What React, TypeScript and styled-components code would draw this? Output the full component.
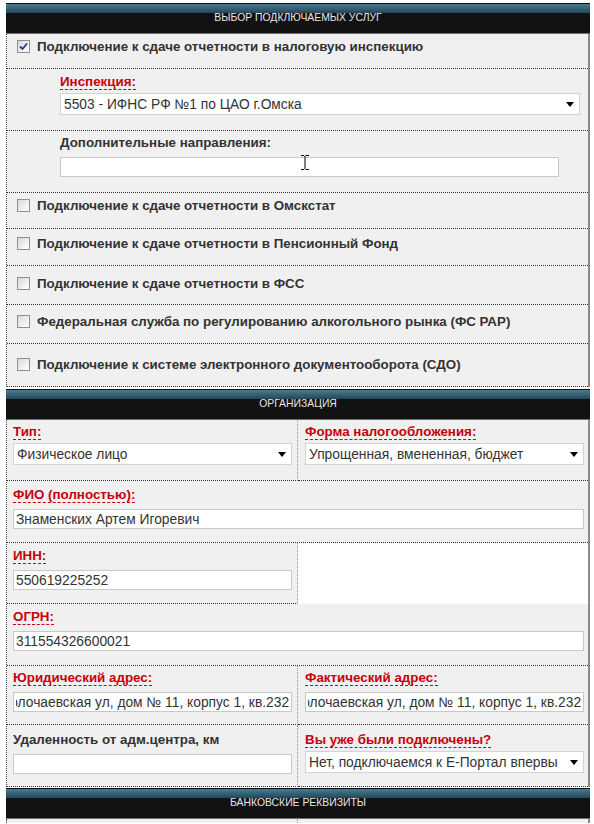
import React, { useLayoutEffect, useRef } from "react";
import styled, { createGlobalStyle } from "styled-components";

const Global = createGlobalStyle`
  * { box-sizing: border-box; }
  body {
    margin: 0;
    background: #fff;
    font-family: "Liberation Sans", Arial, sans-serif;
  }
`;

const Page = styled.div`
  padding: 3px 0 0 6px;
  width: 590px;
`;

const Section = styled.section<{ $gap?: number }>`
  margin-top: ${(p) => p.$gap ?? 0}px;
`;

const Header = styled.div`
  height: 31px;
  border-top: 1px solid #0b0b0b;
  border-bottom: 1px solid #6f6f6f;
  background: linear-gradient(to bottom, #4a7b90 0px, #22475a 9px, #121212 9px, #121212 100%);
  color: #e6e6e6;
  font-size: 10.4px;
  line-height: 12px;
  text-align: center;
  padding-top: 8px;
  text-transform: uppercase;
`;

const Body = styled.div`
  background: #f0f0f0;
  border-left: 1px dotted #444;
  border-right: 2px solid #8a8a8a;
`;

const CheckRow = styled.div<{ $h: number; $pt: number }>`
  height: ${(p) => p.$h}px;
  padding: ${(p) => p.$pt}px 10px 0 10px;
  border-bottom: 1px dotted #333;
  display: flex;
  align-items: flex-start;
  gap: 7px;
  font-weight: bold;
  font-size: 13.35px;
  line-height: 16px;
  color: #333;
`;

const Box = styled.span`
  flex: none;
  width: 13px;
  height: 13px;
  margin-top: 1px;
  border: 1px solid #8e8f8f;
  background: linear-gradient(135deg, #d8d8d8 0%, #f4f4f4 70%, #fdfdfd 100%);
  display: flex;
  align-items: center;
  justify-content: center;
`;

const IndentRow = styled.div<{ $h: number; $pt: number; $pr: number }>`
  position: relative;
  height: ${(p) => p.$h}px;
  padding: ${(p) => p.$pt}px ${(p) => p.$pr}px 0 53px;
  border-bottom: 1px dotted #333;
  display: flex;
  flex-direction: column;
  align-items: flex-start;
`;

const Label = styled.span<{ $req?: boolean }>`
  display: inline-block;
  font-weight: bold;
  font-size: 13.35px;
  line-height: 15px;
  white-space: nowrap;
  color: ${(p) => (p.$req ? "#c8000a" : "#333")};
  border-bottom: 1px dashed ${(p) => (p.$req ? "#c8000a" : "transparent")};
`;

const SelectWrap = styled.div`
  position: relative;
  width: 100%;
  margin-top: 3px;
  &::after {
    content: "";
    position: absolute;
    right: 6px;
    top: 9px;
    border-left: 4px solid transparent;
    border-right: 4px solid transparent;
    border-top: 5px solid #000;
    pointer-events: none;
  }
`;

const Select = styled.select`
  appearance: none;
  -webkit-appearance: none;
  display: block;
  width: 100%;
  height: 22px;
  margin: 0;
  border: 1px solid #d4d4d4;
  border-radius: 0;
  background: #fff;
  font-family: "Liberation Sans", Arial, sans-serif;
  font-size: 13.8px;
  color: #333;
  padding: 0 20px 0 3px;
  outline: none;
`;

const TextInput = styled.input`
  display: block;
  width: 100%;
  height: 20px;
  margin-top: 6px;
  border: 1px solid #c8c8c8;
  border-radius: 0;
  background: #fff;
  font-family: "Liberation Sans", Arial, sans-serif;
  font-size: 13.8px;
  color: #333;
  padding: 0 2px 0 2px;
  outline: none;
`;

const Cursor = styled.svg`
  position: absolute;
  left: 293px;
  top: 23px;
`;

const Grid = styled.div<{ $h: number; $cols?: boolean }>`
  display: grid;
  grid-template-columns: ${(p) => (p.$cols ? "291px 1fr" : "1fr")};
  height: ${(p) => p.$h}px;
`;

const Cell = styled.div<{ $side: "left" | "right" | "full"; $white?: boolean; $pt?: number }>`
  display: flex;
  flex-direction: column;
  align-items: flex-start;
  padding: ${(p) => p.$pt ?? 5}px ${(p) => (p.$side === "left" ? 5 : 4)}px 0
    ${(p) => (p.$side === "right" ? 7 : 6)}px;
  background: ${(p) => (p.$white ? "#fff" : "transparent")};
  border-bottom: ${(p) => (p.$white ? "none" : "1px dotted #333")};
  border-right: ${(p) => (p.$side === "left" ? "1px dotted #9a9a9a" : "none")};
`;

const EmptyCell = styled.div<{ $left?: boolean }>`
  height: 4px;
  border-right: ${(p) => (p.$left ? "1px dotted #9a9a9a" : "none")};
`;

const Checkbox = ({ checked }: { checked?: boolean }) => (
  <Box>
    {checked && (
      <svg width="9" height="9" viewBox="0 0 9 9">
        <path d="M1 4.5 L3.5 7 L8 1.5" fill="none" stroke="#24388f" strokeWidth="1.8" />
      </svg>
    )}
  </Box>
);

const SelectField = ({ value }: { value: string }) => (
  <SelectWrap>
    <Select defaultValue={value}>
      <option>{value}</option>
    </Select>
  </SelectWrap>
);

const ScrolledInput = ({ value }: { value: string }) => {
  const ref = useRef<HTMLInputElement>(null);
  useLayoutEffect(() => {
    const el = ref.current;
    if (el) el.scrollLeft = el.scrollWidth;
  }, []);
  return <TextInput ref={ref} defaultValue={value} />;
};

export default function App() {
  return (
    <>
      <Global />
      <Page>
        <Section>
          <Header>Выбор подключаемых услуг</Header>
          <Body>
            <CheckRow $h={35} $pt={5}>
              <Checkbox checked />
              <span>Подключение к сдаче отчетности в налоговую инспекцию</span>
            </CheckRow>
            <IndentRow $h={62} $pt={5} $pr={8}>
              <Label $req>Инспекция:</Label>
              <SelectField value="5503 - ИФНС РФ №1 по ЦАО г.Омска" />
            </IndentRow>
            <IndentRow $h={62} $pt={4} $pr={29}>
              <Label>Дополнительные направления:</Label>
              <TextInput defaultValue="" />
              <Cursor width="10" height="17" viewBox="0 0 10 17">
                <path
                  d="M1 1.5h3M6 1.5h3M5 1.5v14M1 15.5h3M6 15.5h3"
                  fill="none"
                  stroke="#000"
                  strokeWidth="1"
                />
              </Cursor>
            </IndentRow>
            <CheckRow $h={36} $pt={5}>
              <Checkbox />
              <span>Подключение к сдаче отчетности в Омскстат</span>
            </CheckRow>
            <CheckRow $h={37} $pt={7}>
              <Checkbox />
              <span>Подключение к сдаче отчетности в Пенсионный Фонд</span>
            </CheckRow>
            <CheckRow $h={39} $pt={10}>
              <Checkbox />
              <span>Подключение к сдаче отчетности в ФСС</span>
            </CheckRow>
            <CheckRow $h={39} $pt={9}>
              <Checkbox />
              <span>Федеральная служба по регулированию алкогольного рынка (ФС РАР)</span>
            </CheckRow>
            <CheckRow $h={43} $pt={13}>
              <Checkbox />
              <span>Подключение к системе электронного документооборота (СДО)</span>
            </CheckRow>
          </Body>
        </Section>

        <Section $gap={2}>
          <Header>Организация</Header>
          <Body>
            <Grid $h={61} $cols>
              <Cell $side="left" $pt={4}>
                <Label $req>Тип:</Label>
                <SelectField value="Физическое лицо" />
              </Cell>
              <Cell $side="right" $pt={4}>
                <Label $req>Форма налогообложения:</Label>
                <SelectField value="Упрощенная, вмененная, бюджет" />
              </Cell>
            </Grid>
            <Grid $h={62}>
              <Cell $side="full" $pt={6}>
                <Label $req>ФИО (полностью):</Label>
                <TextInput defaultValue="Знаменских Артем Игоревич" />
              </Cell>
            </Grid>
            <Grid $h={61} $cols>
              <Cell $side="left">
                <Label $req>ИНН:</Label>
                <TextInput defaultValue="550619225252" />
              </Cell>
              <Cell $side="right" $white />
            </Grid>
            <Grid $h={62}>
              <Cell $side="full">
                <Label $req>ОГРН:</Label>
                <TextInput defaultValue="311554326600021" />
              </Cell>
            </Grid>
            <Grid $h={59} $cols>
              <Cell $side="left" $pt={4}>
                <Label $req>Юридический адрес:</Label>
                <ScrolledInput value="Волочаевская ул, дом № 11, корпус 1, кв.232" />
              </Cell>
              <Cell $side="right" $pt={4}>
                <Label $req>Фактический адрес:</Label>
                <ScrolledInput value="Волочаевская ул, дом № 11, корпус 1, кв.232" />
              </Cell>
            </Grid>
            <Grid $h={62} $cols>
              <Cell $side="left" $pt={7}>
                <Label>Удаленность от адм.центра, км</Label>
                <TextInput defaultValue="" />
              </Cell>
              <Cell $side="right" $pt={7}>
                <Label $req>Вы уже были подключены?</Label>
                <SelectField value="Нет, подключаемся к Е-Портал впервы" />
              </Cell>
            </Grid>
          </Body>
        </Section>

        <Section $gap={1}>
          <Header>Банковские реквизиты</Header>
          <Body>
            <Grid $h={4} $cols>
              <EmptyCell $left />
              <EmptyCell />
            </Grid>
          </Body>
        </Section>
      </Page>
    </>
  );
}
